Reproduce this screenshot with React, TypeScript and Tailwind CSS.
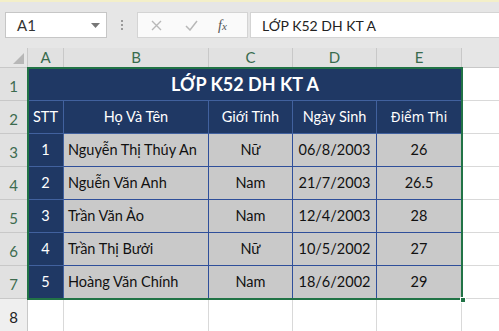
const rows = [
  { stt: "1", ten: "Nguyễn Thị Thúy An", gt: "Nữ", ns: "06/8/2003", diem: "26" },
  { stt: "2", ten: "Nguễn Văn Anh", gt: "Nam", ns: "21/7/2003", diem: "26.5" },
  { stt: "3", ten: "Trần Văn Ảo", gt: "Nam", ns: "12/4/2003", diem: "28" },
  { stt: "4", ten: "Trần Thị Bưởi", gt: "Nữ", ns: "10/5/2002", diem: "27" },
  { stt: "5", ten: "Hoàng Văn Chính", gt: "Nam", ns: "18/6/2002", diem: "29" },
];

const cols = ["A", "B", "C", "D", "E"];

function Toolbar() {
  return (
    <div className="h-[48px] bg-[#e6e6e6] border-t-2 border-[#f3efc9] flex items-start pt-[10px] pl-[5px]">
      {/* name box */}
      <div className="w-[102px] h-[26px] bg-white border border-[#c6c6c6] flex items-center justify-between pl-[11px] pr-[6px] text-[15px] text-[#333]">
        <span>A1</span>
        <svg width="9" height="5" viewBox="0 0 9 5"><path d="M0 0h9L4.5 5z" fill="#777" /></svg>
      </div>
      <div className="w-[30px] h-[26px] flex flex-col items-center justify-center gap-[2px]">
        <span className="w-[2px] h-[2px] bg-[#9a9a9a]" />
        <span className="w-[2px] h-[2px] bg-[#9a9a9a]" />
        <span className="w-[2px] h-[2px] bg-[#9a9a9a]" />
      </div>
      {/* formula buttons */}
      <div className="w-[111px] h-[26px] bg-[#fafafa] border border-[#d4d4d4] flex items-center">
        <svg className="ml-[13px]" width="11" height="11" viewBox="0 0 11 11"><path d="M1 1l9 9M10 1l-9 9" stroke="#b8b8b8" strokeWidth="1.4" /></svg>
        <svg className="ml-[23px]" width="13" height="11" viewBox="0 0 13 11"><path d="M1 6l4 4 7-9" stroke="#b8b8b8" strokeWidth="1.5" fill="none" /></svg>
        <span className="ml-[20px] text-[#555] italic text-[14px] font-['Liberation_Serif',serif]">
          f<span className="text-[11px]">x</span>
        </span>
      </div>
      <div className="ml-[2px] flex-1 h-[26px] bg-white border border-[#d4d4d4] border-r-0 flex items-center pl-[11px] text-[14px] text-[#222]">
        LỚP K52 DH KT A
      </div>
    </div>
  );
}

function Cell({ children, className = "" }: { children?: React.ReactNode; className?: string }) {
  return <div className={`flex items-center ${className}`}>{children}</div>;
}

export default function App() {
  const dataCell = "bg-[#c9c9c9] text-[#111] border-r border-b border-[#2f4f9a]";
  return (
    <div className="w-[499px] h-[331px] overflow-hidden bg-white font-['Lato','Noto_Sans',sans-serif]">
      <Toolbar />
      <div className="relative grid grid-cols-[28px_36px_145px_84px_84px_85px_1fr] grid-rows-[20px_repeat(8,33px)]">
        {/* corner */}
        <div className="bg-[#e6e6e6] border-r border-b border-[#c8c8c8] relative">
          <svg className="absolute right-[3px] bottom-[3px]" width="11" height="11" viewBox="0 0 11 11"><path d="M11 0v11H0z" fill="#b7b7b7" /></svg>
        </div>
        {cols.map((c) => (
          <div key={c} className="bg-[#e1e1e1] border-r border-b border-[#c8c8c8] border-b-[#217346] flex items-center justify-center text-[15px] text-[#386b4d]">
            {c}
          </div>
        ))}
        <div className="bg-[#e6e6e6] border-b border-[#c8c8c8]" />

        {/* row headers + empty gridlines; table overlays rows 1-7 */}
        {Array.from({ length: 8 }).map((_, i) => (
          <div
            key={i}
            style={{ gridRow: i + 2, gridColumn: 1 }}
            className={`${i < 7 ? "bg-[#e1e1e1] text-[#3d6b4f] border-r-[#217346]" : "bg-[#efefef] text-[#222] border-r-[#c8c8c8]"} border-r border-b border-b-[#c8c8c8] flex items-end justify-center pb-[3px] text-[15px]`}
          >
            {i + 1}
          </div>
        ))}
        {Array.from({ length: 8 }).map((_, i) => (
          <div key={"f" + i} style={{ gridRow: i + 2, gridColumn: 7 }} className="border-b border-[#d9d9d9]" />
        ))}
        {cols.map((c, j) => (
          <div key={"r8" + c} style={{ gridRow: 9, gridColumn: j + 2 }} className="border-r border-[#d9d9d9]" />
        ))}

        {/* the table A1:E7 */}
        <div className="col-start-2 col-end-7 row-start-2 row-end-9 relative z-10 outline-2 outline-[#217346] -outline-offset-1 grid grid-cols-[36px_145px_84px_84px_85px] grid-rows-[repeat(7,33px)]">
          <Cell className="col-span-5 justify-center bg-[#1f3864] text-white text-[18px] font-bold border-b border-[#41619e]">
            LỚP K52 DH KT A
          </Cell>
          {["STT", "Họ Và Tên", "Giới Tính", "Ngày Sinh"].map((h) => (
            <Cell key={h} className="justify-center bg-[#1f3864] text-white text-[14.5px] border-r border-b border-[#41619e]">
              {h}
            </Cell>
          ))}
          <Cell className="justify-center bg-[#1f3864] text-white text-[13.5px] font-['Noto_Sans',sans-serif] border-r border-b border-[#41619e]">
            Điểm Thi
          </Cell>
          {rows.map((r) => (
            <div key={r.stt} className="contents text-[14.5px]">
              <Cell className="justify-center bg-[#1f3864] text-white border-r border-b border-[#41619e]">{r.stt}</Cell>
              <Cell className={`${dataCell} pl-[4px]`}>{r.ten}</Cell>
              <Cell className={`${dataCell} justify-center`}>{r.gt}</Cell>
              <Cell className={`${dataCell} justify-center`}>{r.ns}</Cell>
              <Cell className={`${dataCell} justify-center`}>{r.diem}</Cell>
            </div>
          ))}
          <span className="absolute right-[-4px] bottom-[-4px] w-[6px] h-[6px] bg-[#217346] border border-white" />
        </div>
      </div>
    </div>
  );
}
